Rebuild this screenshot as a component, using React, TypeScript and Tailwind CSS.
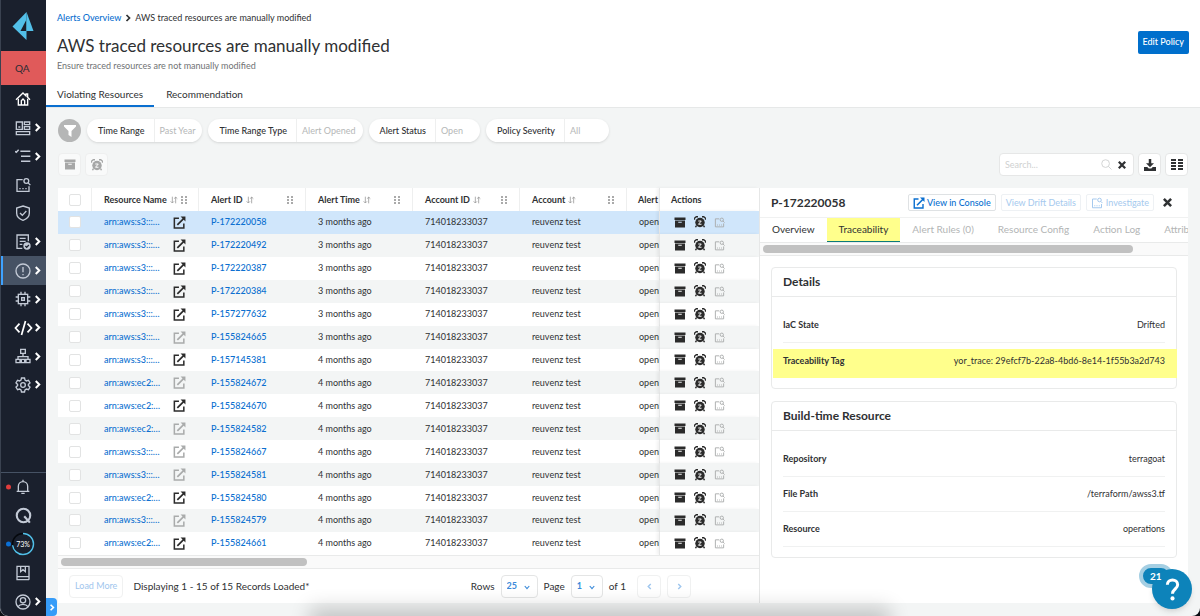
import React from "react";
import clsx from "clsx";

type IconProps = { className?: string };

const Stroke = ({ className, children, width = 2 }: IconProps & { children: React.ReactNode; width?: number }) => (
  <svg viewBox="0 0 24 24" fill="none" stroke="currentColor" strokeWidth={width} className={className} aria-hidden="true">
    {children}
  </svg>
);

const Chevron = ({ className }: IconProps) => (
  <svg viewBox="0 0 8 10" fill="none" stroke="currentColor" strokeWidth="2.300" className={className} aria-hidden="true">
    <path d="M2 1l4 4-4 4" />
  </svg>
);

const ExternalIcon = ({ className }: IconProps) => (
  <svg viewBox="0 0 24 24" fill="none" stroke="currentColor" strokeWidth="2.8" className={className} aria-hidden="true">
    <path d="M11 4H2.5v18H20v-8" />
    <path d="M8 16.5L20 4.5" strokeWidth="3.2" />
    <path d="M14 1h9v9z" fill="currentColor" stroke="none" />
  </svg>
);

const ArchiveIcon = ({ className }: IconProps) => (
  <svg viewBox="0 0 24 22" fill="currentColor" className={className} aria-hidden="true">
    <path d="M1 1h22v5H1z" />
    <path fillRule="evenodd" d="M2 7H22V21H2zM8.500 9.500v2h7v-2z" />
  </svg>
);

const SnoozeIcon = ({ className }: IconProps) => (
  <svg viewBox="0 0 24 24" className={className} aria-hidden="true">
    <circle cx="12" cy="13" r="9.500" fill="currentColor" />
    <path d="M1 7.500V4.500L4.500 1.500H8M23 7.500V4.500L19.500 1.500H16" fill="none" stroke="currentColor" strokeWidth="2.600" />
    <path d="M5 19l-2 3.500M19 19l2 3.500" stroke="currentColor" strokeWidth="3" />
    <path d="M8.500 10h6l-5.500 6.500h6" fill="none" stroke="white" strokeWidth="1.900" />
  </svg>
);

const InvestigateIcon = ({ className }: IconProps) => (
  <Stroke className={className} width={2}>
    <path d="M11.500 4H3v17.500h18V14" />
    <circle cx="17" cy="6" r="3.600" />
    <path d="M19.500 8.700l3.500 3.500" />
    <path d="M6.500 17.500h2M11 17.500h2M15.500 17.500h2" />
  </Stroke>
);

const SortIcon = () => (
  <svg viewBox="0 0 12 12" fill="none" stroke="currentColor" strokeWidth="1.200" className="size-2 shrink-0 text-[#999]" aria-hidden="true">
    <path d="M3.500 1v9.500M1 8l2.500 2.500L6 8M8.500 11V1.500M6.500 4l2-2.500L11 4" />
  </svg>
);

const GripIcon = () => (
  <svg viewBox="0 0 6 8" fill="currentColor" className="h-2 w-[6px] shrink-0 text-[#aaa]" aria-hidden="true">
    <path d="M0 0h2v2H0zM4 0h2v2H4zM0 3h2v2H0zM4 3h2v2H4zM0 6h2v2H0zM4 6h2v2H4z" />
  </svg>
);

const CloseIcon = ({ className }: IconProps) => (
  <svg viewBox="0 0 10 10" stroke="currentColor" strokeWidth="2.800" className={className} aria-hidden="true">
    <path d="M1 1l8 8M9 1L1 9" />
  </svg>
);

const HomeIcon = () => (
  <Stroke className="size-4 text-white">
    <path d="M1.500 13L12 3l4.500 4.300V4.500h2.500v5L22.500 13" />
    <path d="M5 11.500V21h14v-9.500" />
    <path d="M9.500 21v-6.500L12 12l2.500 2.500V21" />
  </Stroke>
);
const DashboardIcon = () => (
  <Stroke className="size-4">
    <path d="M2 3h9v11H2zM14 3h8v4h-8zM14 10h8v4h-8zM2 17.500h20V22H2zM5 10.500h3" />
  </Stroke>
);
const ListIcon = () => (
  <Stroke className="size-4" width={2.2}>
    <path d="M8 5h15M9 12.500h14M9 20h14M0 5l2 1.500L5.500 2.500" />
  </Stroke>
);
const ShieldIcon = () => (
  <Stroke className="size-4">
    <path d="M12 1.500l9.500 3v8c0 5-4 8.500-9.500 10.500C6.500 21 2.500 17.500 2.500 12.500v-8z" />
    <path d="M7.500 12l3.500 3.500 6-6.500" />
  </Stroke>
);
const ReportIcon = () => (
  <Stroke className="size-4">
    <path d="M11 21.500H3v-20h17V11M7 6.500h9M7 11h9M7 15.500h4" />
    <circle cx="18" cy="18" r="5.500" fill="currentColor" stroke="none" />
    <path d="M15.500 18l2 2 3.300-3.500" stroke="#1a202d" />
  </Stroke>
);
const AlertIcon = () => (
  <Stroke className="size-4">
    <circle cx="12" cy="12" r="10.500" />
    <path d="M12 6v8M12 16.500v2" />
  </Stroke>
);
const ChipIcon = () => (
  <Stroke className="size-4">
    <rect x="5" y="5" width="14" height="14" />
    <rect x="10" y="10" width="4" height="4" />
    <path d="M9 1v4M15 1v4M9 19v4M15 19v4M1 9h4M1 15h4M19 9h4M19 15h4" />
  </Stroke>
);
const CodeIcon = () => (
  <svg viewBox="0 0 28 24" fill="none" stroke="currentColor" strokeWidth="2.600" className="h-4 w-[19px] text-white" aria-hidden="true">
    <path d="M8 5.500L2 12l6 6.500M20 5.500l6 6.500-6 6.500M17 1.500L11 22.500" />
  </svg>
);
const NetworkIcon = () => (
  <Stroke className="size-4">
    <path d="M8.500 2h7v6h-7zM1.500 17h6v5h-6zM16.500 17h6v5h-6zM12 8v5M4.500 17v-4h15v4M9.500 17h5v5h-5z" />
  </Stroke>
);
const GearIcon = () => (
  <Stroke className="size-4">
    <circle cx="12" cy="12" r="3.500" />
    <path d="M9.700 1.500h4.600l.7 3.200 2 1.200 3.200-1 2.300 4-2.400 2.200v1.800l2.400 2.200-2.300 4-3.200-1-2 1.200-.7 3.200H9.700L9 19.300l-2-1.200-3.200 1-2.300-4L3.900 12.900v-1.800L1.500 8.900l2.300-4 3.200 1 2-1.200z" />
  </Stroke>
);
const BellIcon = () => (
  <Stroke className="size-4">
    <path d="M2.500 18.500h19M5 18.500V11a7 7 0 0 1 14 0v7.500M12 4V1M9.500 21.500h5" />
  </Stroke>
);
const QuestIcon = () => (
  <Stroke className="size-[17px]" width={3}>
    <circle cx="12" cy="12" r="9.500" />
    <path d="M13 13l8 9" />
  </Stroke>
);
const ProgressIcon = () => (
  <span className="relative flex size-6 items-center justify-center rounded-full">
    <svg viewBox="0 0 24 24" fill="none" className="absolute inset-0" aria-hidden="true">
      <circle cx="12" cy="12" r="10.500" stroke="#05080d" strokeWidth="1.500" />
      <circle cx="12" cy="12" r="10.500" stroke="#52bfe8" strokeWidth="1.500" pathLength="100" strokeDasharray="73 27" transform="rotate(-90 12 12)" />
    </svg>
    <span className="text-[7px] text-white">73%</span>
  </span>
);
const BookIcon = () => (
  <Stroke className="size-4">
    <path d="M21 17.500V2H3v20h18M3 17.500h18v4.500M8.500 2v8l3.500-3 3.500 3V2" />
  </Stroke>
);
const UserIcon = () => (
  <Stroke className="size-4">
    <circle cx="12" cy="12" r="10.500" />
    <circle cx="12" cy="9.500" r="4" />
    <path d="M4.500 19c2-3 5-3.500 7.500-3.500s5.500.5 7.500 3.500" />
  </Stroke>
);

type NavItem = { label: string; icon: React.ReactNode; more?: boolean; active?: boolean; dot?: string };

const mainNav: NavItem[] = [
  { label: "Home", icon: <HomeIcon /> },
  { label: "Dashboard", icon: <DashboardIcon />, more: true },
  { label: "Inventory", icon: <ListIcon />, more: true },
  { label: "Investigate", icon: <InvestigateIcon className="size-4" /> },
  { label: "Policies", icon: <ShieldIcon /> },
  { label: "Compliance", icon: <ReportIcon />, more: true },
  { label: "Alerts", icon: <AlertIcon />, more: true, active: true },
  { label: "Compute", icon: <ChipIcon />, more: true },
  { label: "Code Security", icon: <CodeIcon />, more: true },
  { label: "Network", icon: <NetworkIcon />, more: true },
  { label: "Settings", icon: <GearIcon />, more: true },
];
const bottomNav: NavItem[] = [
  { label: "Notifications", icon: <BellIcon />, dot: "bg-[#e03c3c]" },
  { label: "Search", icon: <QuestIcon /> },
  { label: "Progress", icon: <ProgressIcon />, dot: "bg-[#0a6fd6]" },
  { label: "Documentation", icon: <BookIcon /> },
  { label: "Account", icon: <UserIcon />, more: true },
];

const NavLink = ({ item }: { item: NavItem }) => (
  <a
    href="#"
    aria-label={item.label}
    className={clsx(
      "relative flex items-center text-[#c3cad6]",
      item.active ? "border-l-2 border-[#3ea2ff] bg-[#465264] pl-2" : "pl-[10px]",
    )}
  >
    <span className="flex w-6 shrink-0 justify-center">{item.icon}</span>
    {item.more && <Chevron className="-ml-px h-[9px] w-[7px] shrink-0 text-white" />}
    {item.dot && <span className={clsx("absolute top-1/2 left-[5px] size-[5px] -translate-y-1/2 rounded-full", item.dot)} />}
  </a>
);

const Sidebar = () => (
  <nav className="relative flex w-[46px] shrink-0 flex-col rounded-bl-lg border-l border-[#3a4250] bg-[#1a202d]">
    <a href="#" aria-label="Prisma Cloud" className="flex h-[51px] items-center pl-[11px]">
      <svg viewBox="0 0 22 28" className="h-7 w-[22px]" aria-hidden="true">
        <path d="M14.500 0L.5 14.500 14.500 28z" fill="#52bfe8" />
        <path d="M14.500 0L21.500 19H14.500z" fill="#52bfe8" />
        <path d="M14 8.500L8.500 19H14z" fill="#1a202d" />
      </svg>
    </a>
    <div className="flex h-[34px] items-center bg-[#e05a5a] pl-[14px] text-[10px] text-[#2b2b33]">QA</div>
    <div className="grid h-[314px] auto-rows-fr">
      {mainNav.map((n) => <NavLink key={n.label} item={n} />)}
    </div>
    <div className="mt-auto grid h-[144px] auto-rows-fr border-t border-[#465264]">
      {bottomNav.map((n) => <NavLink key={n.label} item={n} />)}
    </div>
    <button aria-label="Expand menu" className="absolute bottom-0 left-full flex h-[18px] w-[11px] items-center justify-center rounded-r-sm bg-[#369cf8] text-white">
      <Chevron className="h-[7px] w-[6px]" />
    </button>
  </nav>
);

const filters = [
  { label: "Time Range", value: "Past Year" },
  { label: "Time Range Type", value: "Alert Opened" },
  { label: "Alert Status", value: "Open" },
  { label: "Policy Severity", value: "All" },
];

const columns = ["Resource Name", "Alert ID", "Alert Time", "Account ID", "Account"];

const rows = [
  { name: "arn:aws:s3:::…", id: "P-172220058", time: "3 months ago", linked: true },
  { name: "arn:aws:s3:::…", id: "P-172220492", time: "3 months ago", linked: true },
  { name: "arn:aws:s3:::…", id: "P-172220387", time: "3 months ago", linked: true },
  { name: "arn:aws:s3:::…", id: "P-172220384", time: "3 months ago", linked: true },
  { name: "arn:aws:s3:::…", id: "P-157277632", time: "3 months ago", linked: true },
  { name: "arn:aws:s3:::…", id: "P-155824665", time: "3 months ago", linked: false },
  { name: "arn:aws:s3:::…", id: "P-157145381", time: "4 months ago", linked: true },
  { name: "arn:aws:ec2:…", id: "P-155824672", time: "4 months ago", linked: false },
  { name: "arn:aws:ec2:…", id: "P-155824670", time: "4 months ago", linked: true },
  { name: "arn:aws:ec2:…", id: "P-155824582", time: "4 months ago", linked: false },
  { name: "arn:aws:s3:::…", id: "P-155824667", time: "4 months ago", linked: false },
  { name: "arn:aws:s3:::…", id: "P-155824581", time: "4 months ago", linked: false },
  { name: "arn:aws:ec2:…", id: "P-155824580", time: "4 months ago", linked: true },
  { name: "arn:aws:s3:::…", id: "P-155824579", time: "4 months ago", linked: false },
  { name: "arn:aws:ec2:…", id: "P-155824661", time: "4 months ago", linked: true },
];

const Tick = ({ label }: { label: string }) => (
  <input type="checkbox" aria-label={label} className="block size-3 appearance-none rounded-xs border border-[#e2e3e3] bg-white" />
);

const AlertsTable = () => (
  <table className="h-[367px] w-full table-fixed border-separate border-spacing-0 text-left text-[9px] leading-3">
    <colgroup>
      <col className="w-[34px]" />
      {columns.map((c) => <col key={c} className="w-[107px]" />)}
      <col />
      <col className="w-[100px]" />
    </colgroup>
    <thead>
      <tr className="h-[23px] bg-white">
        <th className="border-r border-[#eeefef] p-0 pl-[11px]"><Tick label="Select all" /></th>
        {columns.map((c) => (
          <th key={c} className="border-r border-[#eeefef] py-0 pr-[12px] pl-[12px] font-bold">
            <div className="flex items-center gap-[3px] whitespace-nowrap">
              {c}<SortIcon />
              <span className="ml-auto"><GripIcon /></span>
            </div>
          </th>
        ))}
        <th className="py-0 pl-[11px] font-bold">Alert</th>
        <th className="border-l border-[#e6e7e7] py-0 pl-[11px] font-bold shadow-[-2px_0_3px_rgba(0,0,0,0.06)]">Actions</th>
      </tr>
    </thead>
    <tbody>
      {rows.map((r, i) => (
        <tr key={r.id} className={clsx("h-[22px]", i === 0 ? "bg-[#d0e6fb]" : i % 2 ? "bg-[#f3f5f5]" : "bg-white")}>
          <td className="p-0 pl-[11px]"><Tick label={`Select ${r.id}`} /></td>
          <td className="py-0 pr-[13px] pl-[12px]">
            <div className="flex items-center justify-between">
              <a href="#" className="font-medium text-[#0a6fd0]">{r.name}</a>
              <ExternalIcon className={clsx("size-[13px]", r.linked ? "text-[#2b2b2b]" : "text-[#a9abab]")} />
            </div>
          </td>
          <td className="py-0 pl-[12px]"><a href="#" className="font-medium text-[#0a6fd0]">{r.id}</a></td>
          <td className="py-0 pl-[12px]">{r.time}</td>
          <td className="py-0 pl-[12px]">714018233037</td>
          <td className="py-0 pl-[12px]">reuvenz test</td>
          <td className="py-0 pl-[12px]">open</td>
          <td className="border-l border-[#e6e7e7] py-0 pl-[14px] shadow-[-2px_0_3px_rgba(0,0,0,0.06)]">
            <div className="flex items-center gap-2 text-[#2b2b2b]">
              <button aria-label="Archive"><ArchiveIcon className="h-[11px] w-3" /></button>
              <button aria-label="Snooze"><SnoozeIcon className="size-3" /></button>
              <button aria-label="Investigate" disabled className="text-[#a9abab]"><InvestigateIcon className="size-[11px]" /></button>
            </div>
          </td>
        </tr>
      ))}
    </tbody>
  </table>
);

const PageSelect = ({ label, value, className }: { label: string; value: string; className: string }) => (
  <label className="flex items-center gap-[6px]">
    {label}
    <span className={clsx("relative flex", className)}>
      <select defaultValue={value} className="h-[23px] w-full appearance-none rounded-sm border border-[#e4e5e5] bg-white pl-[5px] text-[9px] font-bold text-[#3b8ad9]">
        <option>{value}</option>
      </select>
      <svg viewBox="0 0 8 6" fill="none" stroke="#3b8ad9" strokeWidth="1.500" className="pointer-events-none absolute top-[10px] right-2 h-[5px] w-[6px]" aria-hidden="true">
        <path d="M1 1l3 3.500L7 1" />
      </svg>
    </span>
  </label>
);

const TableFooter = () => (
  <footer className="flex h-[34px] items-center pl-[11px] text-[10px]">
    <button disabled className="h-[23px] rounded-sm border border-[#f0f1f1] px-[5px] text-[9px] text-[#9fc6ee]">Load More</button>
    <span className="ml-[10px]">Displaying 1 - 15 of 15 Records Loaded*</span>
    <div className="mr-[68px] ml-auto flex items-center gap-[6px]">
      <PageSelect label="Rows" value="25" className="w-[37px]" />
      <PageSelect label="Page" value="1" className="w-8" />
      <span>of 1</span>
      <button disabled aria-label="Previous page" className="ml-[5px] flex h-[23px] w-6 items-center justify-center rounded-sm border border-[#f0f1f1] text-[#9fc6ee]">
        <Chevron className="h-[7px] w-[5px] rotate-180" />
      </button>
      <button disabled aria-label="Next page" className="flex h-[23px] w-6 items-center justify-center rounded-sm border border-[#f0f1f1] text-[#9fc6ee]">
        <Chevron className="h-[7px] w-[5px]" />
      </button>
    </div>
  </footer>
);

const ScrollStrip = ({ className }: { className: string }) => (
  <div className="flex h-[14px] items-center border-y border-[#e9eaea] bg-[#fafafa] px-[3px]">
    <div className={clsx("h-2 rounded-full bg-[#c1c1c1]", className)} />
  </div>
);

const Card = ({ title, children }: { title: string; children: React.ReactNode }) => (
  <section className="rounded-sm border border-[#e9eaea] pb-[10px]">
    <h3 className="flex h-[29px] items-center border-b border-[#e9eaea] px-[11px] text-[12px] font-bold">{title}</h3>
    <dl className="px-[11px] pt-[11px] text-[9px]">{children}</dl>
  </section>
);

const Field = ({ name, value, marked }: { name: string; value: string; marked?: boolean }) => (
  <div
    className={clsx(
      "flex items-center justify-between",
      marked ? "-mr-[12px] -ml-[10px] mt-[6px] h-[29px] bg-[#ffff8c] pr-[12px] pb-[6px] pl-[10px]" : "h-[35px] border-b border-[#f0f1f1]",
    )}
  >
    <dt className="font-bold">{name}</dt>
    <dd>{value}</dd>
  </div>
);

const detailTabs = ["Overview", "Traceability", "Alert Rules (0)", "Resource Config", "Action Log", "Attributes"];

const DetailPanel = () => (
  <aside className="w-[429px] shrink-0 border-l border-[#e6e7e7] bg-white">
    <div className="flex h-[29px] items-center gap-[5px] pr-4 pl-[11px] text-[9px]">
      <h2 className="mr-auto text-[12px] font-bold">P-172220058</h2>
      <button className="flex h-[17px] items-center gap-[2px] rounded-xs border border-[#dfe2e4] px-1 font-medium text-[#0a6fd0]">
        <ExternalIcon className="size-3" />View in Console
      </button>
      <button disabled className="h-[17px] rounded-xs border border-[#eef1f4] px-1 text-[#a5c9ee]">View Drift Details</button>
      <button disabled className="flex h-[17px] items-center gap-[3px] rounded-xs border border-[#eef1f4] px-1 text-[#a5c9ee]">
        <InvestigateIcon className="size-3" />Investigate
      </button>
      <button aria-label="Close panel" className="ml-1"><CloseIcon className="size-[9px]" /></button>
    </div>
    <div role="tablist" className="flex h-[25px] overflow-hidden border-t border-[#f0f1f1] text-[10px] whitespace-nowrap">
      {detailTabs.map((t) => (
        <button
          key={t}
          role="tab"
          aria-selected={t === "Traceability"}
          className={clsx(
            "shrink-0 border-b px-[12px] pb-px",
            t === "Traceability"
              ? "border-[#0b7a78] bg-[#ffff8c]"
              : t === "Overview" ? "border-transparent" : "border-transparent text-[#b3b5b5]",
          )}
        >
          {t}
        </button>
      ))}
    </div>
    <ScrollStrip className="w-[370px]" />
    <div className="grid gap-3 px-[11px] pt-[11px]">
      <Card title="Details">
        <Field name="IaC State" value="Drifted" />
        <Field name="Traceability Tag" value="yor_trace: 29efcf7b-22a8-4bd6-8e14-1f55b3a2d743" marked />
      </Card>
      <Card title="Build-time Resource">
        <Field name="Repository" value="terragoat" />
        <Field name="File Path" value="/terraform/awss3.tf" />
        <Field name="Resource" value="operations" />
      </Card>
    </div>
  </aside>
);

const PageHeader = () => (
  <header className="border-b border-[#e6e8e8] bg-white px-[11px]">
    <div className="flex items-center justify-between">
      <div>
        <nav className="flex items-center gap-1 pt-3 text-[9px] leading-3">
          <a href="#" className="font-medium text-[#0a6fd0]">Alerts Overview</a>
          <Chevron className="h-2 w-[6px]" />
          <span>AWS traced resources are manually modified</span>
        </nav>
        <h1 className="mt-3 text-[17px] leading-5">AWS traced resources are manually modified</h1>
        <p className="mt-1 text-[9px] leading-3 text-[#707274]">Ensure traced resources are not manually modified</p>
      </div>
      <button className="mt-3 h-[23px] rounded-xs bg-[#006fcc] px-[5px] text-[9px] font-medium text-white">Edit Policy</button>
    </div>
    <div role="tablist" className="-ml-[11px] flex pt-[11px] text-[10px]">
      <button role="tab" aria-selected="true" className="h-6 border-b-2 border-[#0a6fd0] px-[11px]">Violating Resources</button>
      <button role="tab" aria-selected="false" className="h-6 border-b-2 border-transparent px-3">Recommendation</button>
    </div>
  </header>
);

const FilterBar = () => (
  <div className="flex items-center gap-[6px] text-[9px]">
    <button aria-label="Filters" className="flex size-[23px] items-center justify-center rounded-full bg-[#b5b6b6] text-white">
      <svg viewBox="0 0 12 12" fill="currentColor" className="size-3" aria-hidden="true"><path d="M0 0h12v1.500L7.500 6v6l-3-2V6L0 1.500z" /></svg>
    </button>
    {filters.map((f) => (
      <button key={f.label} className="flex h-[23px] items-stretch overflow-hidden rounded-full bg-white shadow-sm">
        <span className="flex items-center border-r border-[#eeefef] pr-[9px] pl-[11px] font-medium">{f.label}</span>
        <span className="flex min-w-11 items-center pr-[7px] pl-[5px] text-[#b5b7b7]">{f.value}</span>
      </button>
    ))}
  </div>
);

const Toolbar = () => (
  <div className="mt-[11px] mb-3 flex items-center gap-1">
    <button disabled aria-label="Archive selected" className="flex size-[23px] items-center justify-center rounded-sm border border-[#eeefef] bg-[#f9fafa] text-[#a6a7a7]">
      <ArchiveIcon className="h-[11px] w-3" />
    </button>
    <button disabled aria-label="Snooze selected" className="flex size-[23px] items-center justify-center rounded-sm border border-[#eeefef] bg-[#f9fafa] text-[#a6a7a7]">
      <SnoozeIcon className="size-3" />
    </button>
    <div className="ml-auto flex h-[23px] w-[135px] items-center rounded-sm border border-[#e6e7e7] bg-white px-[5px]">
      <input type="search" aria-label="Search" placeholder="Search..." className="min-w-0 flex-1 text-[9px] placeholder:text-[#cfd1d1] focus:outline-none" />
      <svg viewBox="0 0 12 12" fill="none" stroke="#cfd1d1" className="size-[11px]" aria-hidden="true"><circle cx="5" cy="5" r="4.200" /><path d="M8 8l3.500 3.500" /></svg>
      <button aria-label="Clear search" className="mr-[2px] ml-[6px]"><CloseIcon className="size-2" /></button>
    </div>
    <button aria-label="Download" className="flex size-[23px] items-center justify-center rounded-sm border border-[#e6e7e7] bg-white">
      <svg viewBox="0 0 24 24" fill="currentColor" className="size-3" aria-hidden="true">
        <path d="M9.500 0h5v8.500H20l-8 8-8-8h5.500z" />
        <path d="M0 16h6.500l3 3h5l3-3H24v8H0z" />
      </svg>
    </button>
    <button aria-label="Choose columns" className="flex size-[23px] items-center justify-center rounded-sm border border-[#e6e7e7] bg-white">
      <svg viewBox="0 0 12 11" fill="currentColor" className="h-[11px] w-3" aria-hidden="true">
        <path d="M0 0h5v2H0zM0 3h5v2H0zM0 6h5v2H0zM0 9h5v2H0zM7 0h5v2H7zM7 3h5v2H7zM7 6h5v2H7zM7 9h5v2H7z" />
      </svg>
    </button>
  </div>
);

const HelpButton = () => (
  <button aria-label="Help" className="absolute right-2 bottom-[7px] size-10 text-white">
    <span className="absolute -top-[5px] -left-[13px] h-6 w-[34px] rounded-full border-4 border-[#a5cfe3] bg-[#0d83ba]" />
    <span className="absolute inset-0 flex items-center justify-center rounded-full bg-[#0d83ba] shadow-md">
      <svg viewBox="0 0 16 24" fill="none" className="h-[23px] w-[15px]" aria-hidden="true">
        <path d="M2.500 7C2.500 0 13.500 0 13.500 7c0 4.500-5.500 4.500-5.500 9.500" stroke="white" strokeWidth="3.200" />
        <circle cx="8" cy="21.500" r="2.200" fill="white" />
      </svg>
    </span>
    <span className="absolute top-[1px] -left-[2px] text-[10px] leading-3 font-bold">21</span>
  </button>
);

export default function App() {
  return (
    <div className="bg-[#0c0f14] font-[Lato,sans-serif] text-[#2f3133]">
      <div className="relative flex min-h-screen overflow-hidden rounded-b-lg bg-[#f3f5f5]">
        <Sidebar />
        <main className="min-w-0 flex-1">
          <PageHeader />
          <div className="px-3 pt-[11px] pb-3">
            <FilterBar />
            <Toolbar />
            <div className="flex">
              <div className="min-w-0 flex-1 bg-white">
                <AlertsTable />
                <ScrollStrip className="w-[246px]" />
                <TableFooter />
              </div>
              <DetailPanel />
            </div>
          </div>
        </main>
        <div className="pointer-events-none absolute right-[27%] bottom-0 left-[27%] h-0 shadow-[0_6px_20px_14px_rgba(0,0,0,0.2)]" />
        <HelpButton />
      </div>
    </div>
  );
}
